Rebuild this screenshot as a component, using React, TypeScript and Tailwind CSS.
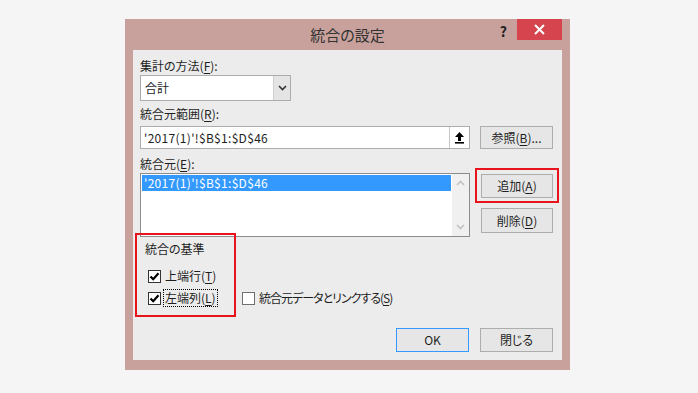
import React from "react";

function U({ children }: { children: React.ReactNode }) {
  return <span className="underline underline-offset-[2px]">{children}</span>;
}

function Btn({ children, className = "" }: { children: React.ReactNode; className?: string }) {
  return (
    <div
      className={`flex items-center justify-center border bg-[#e6e6e6] leading-[16px] ${className}`}
    >
      {children}
    </div>
  );
}

function Check({ checked }: { checked: boolean }) {
  return (
    <div
      className={`flex h-[13px] w-[13px] shrink-0 items-center justify-center border bg-white ${
        checked ? "border-[#333333]" : "border-[#707070]"
      }`}
    >
      {checked && (
        <svg width="11" height="11" viewBox="0 0 11 11">
          <path d="M1.5 5.5 L4.2 8.2 L9.5 2.2" stroke="#000" strokeWidth="2.2" fill="none" />
        </svg>
      )}
    </div>
  );
}

function Chevron({ up = false, color }: { up?: boolean; color: string }) {
  return (
    <svg width="9" height="6" viewBox="0 0 9 6">
      <path
        d={up ? "M1 5 L4.5 1.5 L8 5" : "M1 1 L4.5 4.5 L8 1"}
        stroke={color}
        strokeWidth="1.6"
        fill="none"
      />
    </svg>
  );
}

export default function App() {
  return (
    <div className="h-[393px] w-[698px] overflow-hidden bg-[#f5f5f5] pl-[125px] pt-[19px] font-['Noto_Sans_CJK_JP','Noto_Sans',sans-serif] text-[12px] text-[#1e1e1e] [font-feature-settings:'palt']">
      {/* dialog frame */}
      <div className="flex h-[351px] w-[445px] flex-col bg-[#c8a19c] px-[8px] pb-[10px]">
        {/* title bar */}
        <div className="relative flex h-[31px] items-center justify-center">
          <span className="text-[15px] leading-[20px] text-[#333333]">統合の設定</span>
          <div className="absolute right-0 top-0 flex items-start">
            <div className="mr-[10px] mt-[2px] text-[14px] font-bold leading-[20px] text-[#222222]">?</div>
            <div className="flex h-[21px] w-[45px] items-center justify-center bg-[#d6454d]">
              <svg width="11" height="11" viewBox="0 0 11 11">
                <path d="M1 1 L10 10 M10 1 L1 10" stroke="#fff" strokeWidth="2" />
              </svg>
            </div>
          </div>
        </div>

        {/* client area */}
        <div className="flex flex-1 flex-col bg-[#ececec] pl-[7px] pr-[9px] pt-[8px]">
          <div className="h-[16px] leading-[16px]">
            集計の方法(<U>F</U>):
          </div>
          <div className="mt-[1px] flex h-[26px] w-[151px] border border-[#acacac] bg-white">
            <div className="flex-1 pl-[4px] leading-[24px]">合計</div>
            <div className="flex w-[17px] items-center justify-center border-l border-[#d0d0d0] bg-[#e4e4e4]">
              <Chevron color="#333333" />
            </div>
          </div>

          <div className="mt-[5px] h-[16px] leading-[16px]">
            統合元範囲(<U>R</U>):
          </div>
          <div className="mt-[4px] flex items-start">
            <div className="flex h-[23px] w-[330px] border border-[#abadb3] bg-white">
              <div className="flex-1 pl-[3px] leading-[21px] tracking-[0.3px]">'2017(1)'!$B$1:$D$46</div>
              <div className="flex w-[20px] items-center justify-center border-l border-[#c8c8c8] bg-white">
                <svg width="11" height="13" viewBox="0 0 11 13">
                  <polygon points="5.5,1 10,6 7,6 7,10 4,10 4,6 1,6" fill="#000" />
                  <rect x="1" y="11" width="9" height="1.6" fill="#000" />
                </svg>
              </div>
            </div>
            <Btn className="ml-[10px] h-[23px] w-[73px] border-[#adadad]">
              参照(<U>B</U>)...
            </Btn>
          </div>

          <div className="mt-[7px] flex items-start">
            <div className="flex flex-col">
              <div className="h-[16px] leading-[16px]">
                統合元(<U>E</U>):
              </div>
              <div className="mt-[1px] flex h-[64px] w-[330px] border border-[#8c8c8c] bg-white">
                <div className="flex-1 p-[1px]">
                  <div className="h-[16px] bg-[#3399ff] pl-[2px] leading-[16px] tracking-[0.3px] text-white">
                    '2017(1)'!$B$1:$D$46
                  </div>
                </div>
                <div className="flex w-[17px] flex-col items-center justify-between bg-[#f0f0f0] py-[6px]">
                  <Chevron up color="#c2c2c2" />
                  <Chevron color="#c2c2c2" />
                </div>
              </div>
            </div>
            <div className="ml-[5px] flex flex-col pt-[12px]">
              <div className="border-2 border-[#e8141c] px-[4px] pb-[3px] pt-[4px]">
                <Btn className="h-[24px] w-[72px] border-[#adadad]">
                  追加(<U>A</U>)
                </Btn>
              </div>
              <Btn className="ml-[6px] mt-[5px] h-[25px] w-[72px] border-[#adadad]">
                削除(<U>D</U>)
              </Btn>
            </div>
          </div>

          <div className="-mt-[4px] flex items-start">
            <div className="-ml-[5px] h-[84px] w-[101px] border-2 border-[#e8141c] pl-[8px] pt-[6px]">
              <div className="h-[16px] leading-[16px]">統合の基準</div>
              <div className="ml-[3px] mt-[11px] flex h-[16px] items-center">
                <Check checked />
                <span className="ml-[4px] leading-[16px]">
                  上端行(<U>T</U>)
                </span>
              </div>
              <div className="ml-[3px] mt-[6px] flex h-[16px] items-center">
                <Check checked />
                <span className="ml-[2px] border border-dotted border-black px-[1px] leading-[16px]">
                  左端列(<U>L</U>)
                </span>
              </div>
            </div>
            <div className="ml-[6px] mt-[57px] flex h-[16px] items-center">
              <Check checked={false} />
              <span className="ml-[4px] leading-[16px] tracking-[-1px]">
                統合元データとリンクする(<U>S</U>)
              </span>
            </div>
          </div>

          <div className="mt-[11px] flex justify-end gap-[11px]">
            <Btn className="h-[24px] w-[73px] border-[#3399ff]">OK</Btn>
            <Btn className="h-[24px] w-[73px] border-[#adadad]">閉じる</Btn>
          </div>
        </div>
      </div>
    </div>
  );
}
